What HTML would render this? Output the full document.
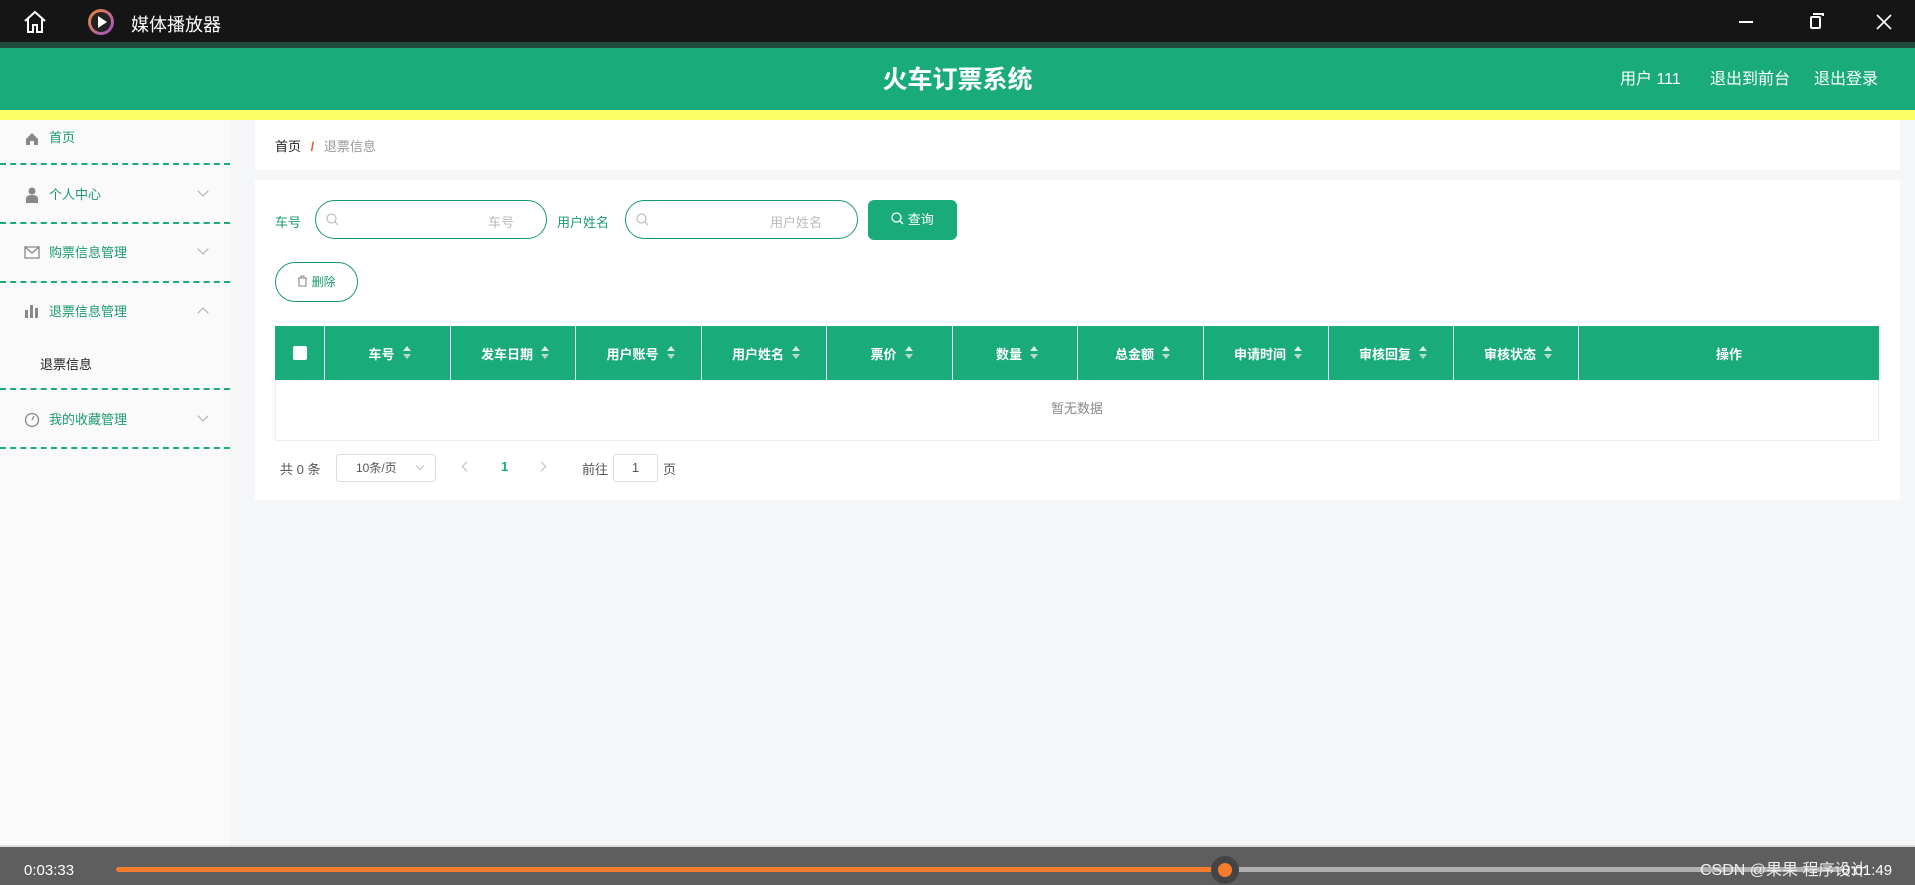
<!DOCTYPE html>
<html><head><meta charset="utf-8"><style>
*{margin:0;padding:0;box-sizing:border-box}
body{width:1915px;height:885px;overflow:hidden;position:relative;background:#f5f6f8;font-family:"Liberation Sans","Noto Sans CJK SC",sans-serif;font-size:13px;color:#333}
.a{position:absolute}
.top{left:0;top:0;width:1915px;height:43px;background:#151515}
.strip{left:0;top:42px;width:1915px;height:6px;background:#1f4a3c}
.hdr{left:0;top:48px;width:1915px;height:62px;background:#1aab7b}
.yel{left:0;top:110px;width:1915px;height:10px;background:#ffff66}
.side{left:0;top:120px;width:230px;height:725px;background:#fafafa}
.dash{left:0;width:230px;height:0;border-top:2px dashed #1aab7b}
.mi{left:49px;color:#1a9a70;font-size:13px;line-height:20px}
.arr{left:199px;width:8px;height:8px;border-right:1px solid #aaa;border-bottom:1px solid #aaa;transform:rotate(45deg)}
.card{background:#fff}
.th{top:326px;height:54px;background:#1aab7b;color:#fff;font-weight:bold;font-size:13px;display:flex;align-items:center;justify-content:center;border-right:1px solid #e8f5ef}
.sort{display:inline-block;margin-left:12px;width:0;height:14px;position:relative}
.sort:before{content:"";position:absolute;left:-4px;top:0;border:4px solid transparent;border-bottom:5px solid #d8f0e6;border-top:0}
.sort:after{content:"";position:absolute;left:-4px;top:8px;border:4px solid transparent;border-top:5px solid #b8d8cc;border-bottom:0}
.inp{height:39px;border:1px solid #1a9a70;border-radius:20px;background:#fff}
.player{left:0;top:845px;width:1915px;height:40px;background:#5e5e5f;border-top:2px solid #ddd}
</style></head><body>
<div class="a top"></div>
<svg class="a" style="left:22px;top:10px" width="26" height="24" viewBox="0 0 26 24"><path d="M3 11 L13 2 L23 11 M6 9 V22 H11 V15 H15 V22 H20 V9" fill="none" stroke="#fff" stroke-width="2"/></svg>
<div class="a" style="left:88px;top:9px;width:26px;height:26px;border-radius:50%;background:linear-gradient(135deg,#f08a2c,#9b4fd8);"></div>
<div class="a" style="left:91px;top:12px;width:20px;height:20px;border-radius:50%;background:#222"></div>
<div class="a" style="left:98px;top:16px;width:0;height:0;border-left:9px solid #fff;border-top:6px solid transparent;border-bottom:6px solid transparent"></div>
<div class="a" style="left:131px;top:11px;color:#fff;font-size:18px">媒体播放器</div>
<div class="a" style="left:1739px;top:21px;width:14px;height:2px;background:#fff"></div>
<div class="a" style="left:1810px;top:16px;width:11px;height:13px;border:2px solid #fff;border-radius:2px"></div>
<div class="a" style="left:1813px;top:13px;width:11px;height:3px;border-top:2px solid #fff;border-right:2px solid #fff"></div>
<svg class="a" style="left:1876px;top:14px" width="16" height="16" viewBox="0 0 16 16"><path d="M1 1 L15 15 M15 1 L1 15" stroke="#fff" stroke-width="1.6"/></svg>
<div class="a strip"></div>
<div class="a hdr"></div>
<div class="a" style="left:0;top:60px;width:1915px;text-align:center;color:#fff;font-size:25px;font-weight:bold">火车订票系统</div>
<div class="a" style="left:1620px;top:65px;color:#fff;font-size:16px">用户 111</div>
<div class="a" style="left:1710px;top:65px;color:#fff;font-size:16px">退出到前台</div>
<div class="a" style="left:1814px;top:65px;color:#fff;font-size:16px">退出登录</div>
<div class="a yel"></div>
<div class="a side"></div>
<svg class="a" style="left:25px;top:132px" width="14" height="14" viewBox="0 0 14 14"><path d="M1 7 L7 1 L13 7 V13 H9 V9 H5 V13 H1Z" fill="#888"/></svg>
<div class="a mi" style="top:128px">首页</div>
<div class="a dash" style="top:163px"></div>
<svg class="a" style="left:25px;top:187px" width="14" height="16" viewBox="0 0 14 16"><circle cx="7" cy="4" r="3.5" fill="#888"/><path d="M1 16 V12 Q1 8 7 8 Q13 8 13 12 V16Z" fill="#888"/></svg>
<div class="a mi" style="top:185px">个人中心</div><div class="a arr" style="top:187px"></div>
<div class="a dash" style="top:222px"></div>
<svg class="a" style="left:24px;top:246px" width="16" height="13" viewBox="0 0 16 13"><rect x="1" y="1" width="14" height="11" fill="none" stroke="#888" stroke-width="1.3"/><path d="M1 1 L8 7 L15 1" fill="none" stroke="#888" stroke-width="1.3"/></svg>
<div class="a mi" style="top:243px">购票信息管理</div><div class="a arr" style="top:245px"></div>
<div class="a dash" style="top:281px"></div>
<svg class="a" style="left:25px;top:304px" width="14" height="14" viewBox="0 0 14 14"><rect x="0" y="6" width="3" height="8" fill="#888"/><rect x="5" y="1" width="3" height="13" fill="#888"/><rect x="10" y="4" width="3" height="10" fill="#888"/></svg>
<div class="a mi" style="top:302px">退票信息管理</div><div class="a arr" style="top:309px;transform:rotate(-135deg)"></div>
<div class="a" style="left:40px;top:354px;color:#222;font-size:13px">退票信息</div>
<div class="a dash" style="top:388px"></div>
<svg class="a" style="left:24px;top:412px" width="16" height="16" viewBox="0 0 16 16"><circle cx="8" cy="8" r="6.5" fill="none" stroke="#888" stroke-width="1.3"/><path d="M8 8 L10 4" stroke="#888" stroke-width="1.3"/></svg>
<div class="a mi" style="top:410px">我的收藏管理</div><div class="a arr" style="top:412px"></div>
<div class="a dash" style="top:447px"></div>

<div class="a card" style="left:255px;top:120px;width:1645px;height:50px"></div>
<div class="a" style="left:275px;top:136px;font-size:13px;color:#222">首页 <span style="color:#e5533c;margin:0 6px;font-weight:bold">/</span> <span style="color:#999">退票信息</span></div>
<div class="a card" style="left:255px;top:180px;width:1645px;height:320px"></div>
<div class="a" style="left:275px;top:212px;color:#1a9a70">车号</div>
<div class="a inp" style="left:315px;top:200px;width:232px"></div>
<svg class="a" style="left:326px;top:213px" width="13" height="13" viewBox="0 0 13 13"><circle cx="5.5" cy="5.5" r="4.5" fill="none" stroke="#bbb" stroke-width="1.2"/><path d="M9 9 L12 12" stroke="#bbb" stroke-width="1.2"/></svg>
<div class="a" style="left:488px;top:212px;color:#bbb">车号</div>
<div class="a" style="left:557px;top:212px;color:#1a9a70">用户姓名</div>
<div class="a inp" style="left:625px;top:200px;width:233px"></div>
<svg class="a" style="left:636px;top:213px" width="13" height="13" viewBox="0 0 13 13"><circle cx="5.5" cy="5.5" r="4.5" fill="none" stroke="#bbb" stroke-width="1.2"/><path d="M9 9 L12 12" stroke="#bbb" stroke-width="1.2"/></svg>
<div class="a" style="left:770px;top:212px;color:#bbb">用户姓名</div>
<div class="a" style="left:868px;top:200px;width:89px;height:40px;background:#1aab7b;border-radius:6px;color:#fff;text-align:center;line-height:40px"><svg width="13" height="13" viewBox="0 0 13 13" style="vertical-align:-1px"><circle cx="5.5" cy="5.5" r="4.5" fill="none" stroke="#fff" stroke-width="1.3"/><path d="M9 9 L12 12" stroke="#fff" stroke-width="1.3"/></svg> 查询</div>
<div class="a" style="left:275px;top:262px;width:83px;height:40px;border:1px solid #1a9a70;border-radius:20px;background:#fff;color:#1a9a70;text-align:center;line-height:38px;font-size:12px"><svg width="11" height="12" viewBox="0 0 11 12" style="vertical-align:-1px"><path d="M1 3 H10 M4 3 V1 H7 V3 M2 3 V11 H9 V3" fill="none" stroke="#888" stroke-width="1.1"/></svg> 删除</div>

<div class="a th" style="left:275px;width:50px"><div style="width:14px;height:14px;background:#fff;border-radius:2px"></div></div>
<div class="a th" style="left:325px;width:126px">车号<span class="sort"></span></div>
<div class="a th" style="left:451px;width:125px">发车日期<span class="sort"></span></div>
<div class="a th" style="left:576px;width:126px">用户账号<span class="sort"></span></div>
<div class="a th" style="left:702px;width:125px">用户姓名<span class="sort"></span></div>
<div class="a th" style="left:827px;width:126px">票价<span class="sort"></span></div>
<div class="a th" style="left:953px;width:125px">数量<span class="sort"></span></div>
<div class="a th" style="left:1078px;width:126px">总金额<span class="sort"></span></div>
<div class="a th" style="left:1204px;width:125px">申请时间<span class="sort"></span></div>
<div class="a th" style="left:1329px;width:125px">审核回复<span class="sort"></span></div>
<div class="a th" style="left:1454px;width:125px">审核状态<span class="sort"></span></div>
<div class="a th" style="left:1579px;width:300px;border-right:0">操作</div>
<div class="a" style="left:275px;top:380px;width:1604px;height:61px;border:1px solid #ebeef5;border-top:0;text-align:center;line-height:58px;color:#888">暂无数据</div>

<div class="a" style="left:280px;top:459px;color:#555">共 0 条</div>
<div class="a" style="left:336px;top:454px;width:100px;height:28px;border:1px solid #dcdfe6;border-radius:3px;background:#fff;padding-left:19px;line-height:26px;font-size:12px;color:#555">10条/页 <span style="position:absolute;left:80px;top:8px;width:6px;height:6px;border-right:1px solid #bbb;border-bottom:1px solid #bbb;transform:rotate(45deg)"></span></div>
<div class="a" style="left:463px;top:463px;width:7px;height:7px;border-left:1px solid #bbb;border-bottom:1px solid #bbb;transform:rotate(45deg)"></div>
<div class="a" style="left:501px;top:459px;color:#1aab7b;font-weight:bold">1</div>
<div class="a" style="left:538px;top:463px;width:7px;height:7px;border-right:1px solid #bbb;border-top:1px solid #bbb;transform:rotate(45deg)"></div>
<div class="a" style="left:582px;top:459px;color:#555">前往</div>
<div class="a" style="left:613px;top:454px;width:45px;height:28px;border:1px solid #dcdfe6;border-radius:3px;background:#fff;text-align:center;line-height:26px;color:#555">1</div>
<div class="a" style="left:663px;top:459px;color:#555">页</div>

<div class="a player"></div>
<div class="a" style="left:24px;top:862px;color:#fff;font-size:15px">0:03:33</div>
<div class="a" style="left:116px;top:867px;width:1110px;height:5px;background:#f47c2c;border-radius:3px"></div>
<div class="a" style="left:1226px;top:867px;width:615px;height:5px;background:#b0b0b0"></div>
<div class="a" style="left:1211px;top:856px;width:28px;height:28px;border-radius:50%;background:#444"></div>
<div class="a" style="left:1218px;top:863px;width:14px;height:14px;border-radius:50%;background:#f47c2c"></div>
<div class="a" style="left:1700px;top:856px;color:#eee;font-size:16px">CSDN @果果 程序设计</div>
<div class="a" style="left:1842px;top:862px;color:#fff;font-size:15px">0:01:49</div>
</body></html>
